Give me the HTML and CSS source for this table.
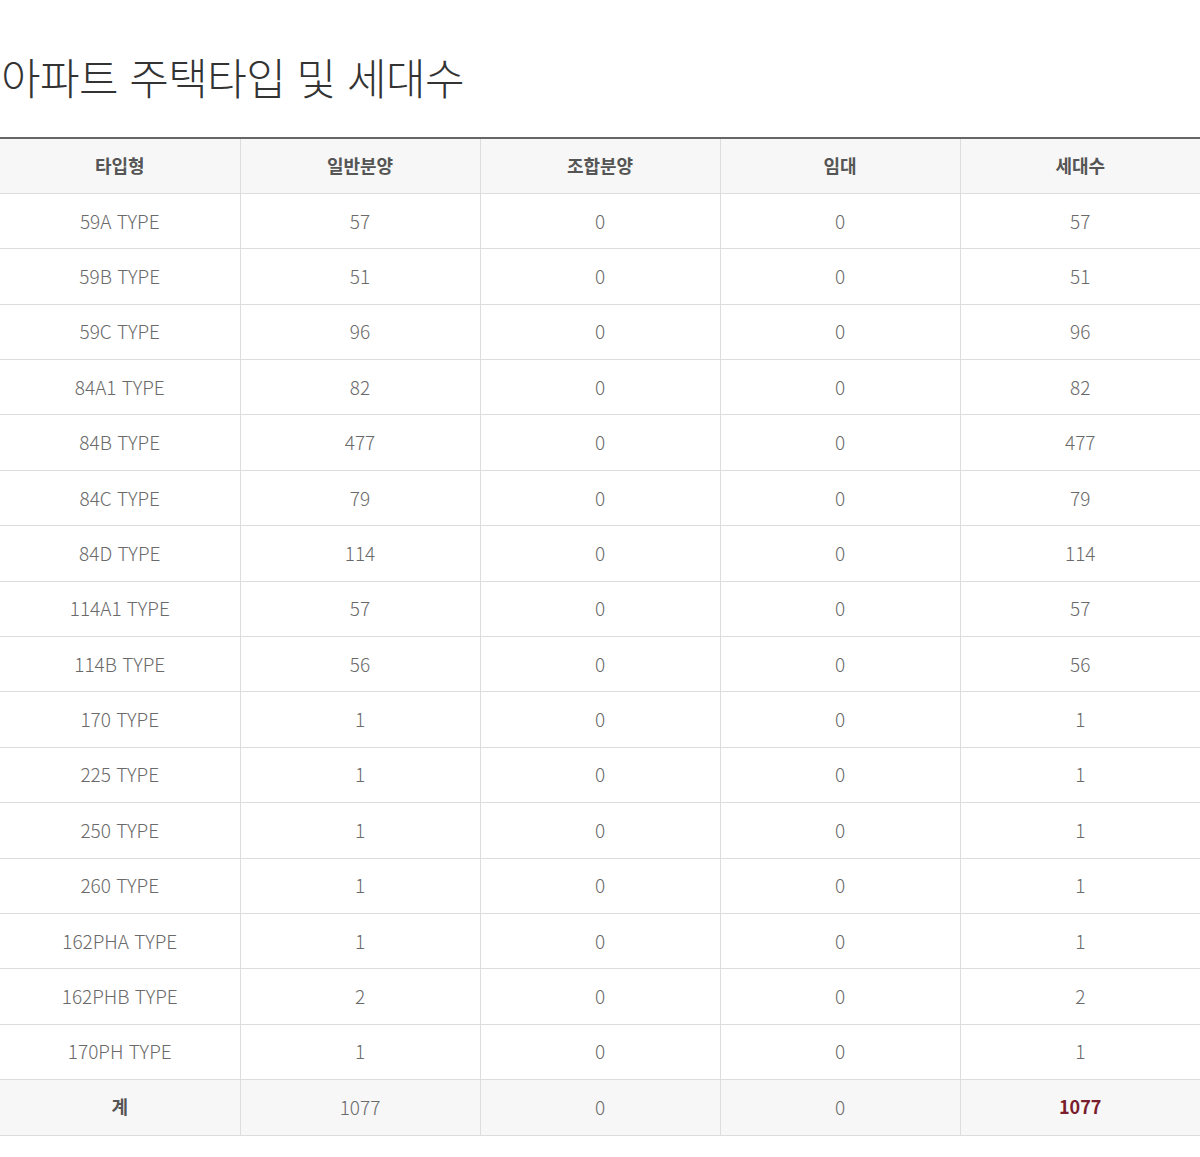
FILE: index.html
```html
<!DOCTYPE html>
<html lang="ko">
<head>
<meta charset="utf-8">
<link rel="stylesheet" href="styles.css">
</head>
<body>
<h2 class="title">아파트 주택타입 및 세대수</h2>
<table class="units">
<thead>
<tr><th>타입형</th><th>일반분양</th><th>조합분양</th><th>임대</th><th>세대수</th></tr>
</thead>
<tbody>
<tr><td>59A TYPE</td><td>57</td><td>0</td><td>0</td><td>57</td></tr>
<tr><td>59B TYPE</td><td>51</td><td>0</td><td>0</td><td>51</td></tr>
<tr><td>59C TYPE</td><td>96</td><td>0</td><td>0</td><td>96</td></tr>
<tr><td>84A1 TYPE</td><td>82</td><td>0</td><td>0</td><td>82</td></tr>
<tr><td>84B TYPE</td><td>477</td><td>0</td><td>0</td><td>477</td></tr>
<tr><td>84C TYPE</td><td>79</td><td>0</td><td>0</td><td>79</td></tr>
<tr><td>84D TYPE</td><td>114</td><td>0</td><td>0</td><td>114</td></tr>
<tr><td>114A1 TYPE</td><td>57</td><td>0</td><td>0</td><td>57</td></tr>
<tr><td>114B TYPE</td><td>56</td><td>0</td><td>0</td><td>56</td></tr>
<tr><td>170 TYPE</td><td>1</td><td>0</td><td>0</td><td>1</td></tr>
<tr><td>225 TYPE</td><td>1</td><td>0</td><td>0</td><td>1</td></tr>
<tr><td>250 TYPE</td><td>1</td><td>0</td><td>0</td><td>1</td></tr>
<tr><td>260 TYPE</td><td>1</td><td>0</td><td>0</td><td>1</td></tr>
<tr><td>162PHA TYPE</td><td>1</td><td>0</td><td>0</td><td>1</td></tr>
<tr><td>162PHB TYPE</td><td>2</td><td>0</td><td>0</td><td>2</td></tr>
<tr><td>170PH TYPE</td><td>1</td><td>0</td><td>0</td><td>1</td></tr>
</tbody>
<tfoot>
<tr><th>계</th><td>1077</td><td>0</td><td>0</td><td class="total">1077</td></tr>
</tfoot>
</table>
</body>
</html>
```
FILE: styles.css
```css
html, body {
  margin: 0;
  padding: 0;
  background: #fff;
}
body {
  font-family: "Noto Sans CJK KR", "Noto Sans", sans-serif;
  color: #666;
}
.title {
  margin: 0;
  padding: 49px 0 0 1px;
  height: 137px;
  box-sizing: border-box;
  font-size: 43px;
  font-weight: 300;
  line-height: 54px;
  color: #333;
  letter-spacing: -0.6px;
}
.units {
  width: 1200px;
  border-collapse: collapse;
  table-layout: fixed;
  border-top: 2px solid #666;
}
.units th, .units td {
  height: 55.4px;
  padding: 0 0 2px 0;
  box-sizing: border-box;
  text-align: center;
  font-size: 18px;
  border-bottom: 1px solid #ddd;
  border-left: 1px solid #ddd;
}
.units tr > :first-child {
  border-left: none;
}
.units td {
  font-size: 19px;
  font-weight: 300;
  color: #6a6a6a;
}
.units th {
  font-weight: 700;
  color: #555;
}
.units thead th, .units tfoot th, .units tfoot td {
  background: #f7f7f7;
}
.units td.total {
  font-size: 18px;
  color: #7a1d2e;
  font-weight: 700;
}
```
